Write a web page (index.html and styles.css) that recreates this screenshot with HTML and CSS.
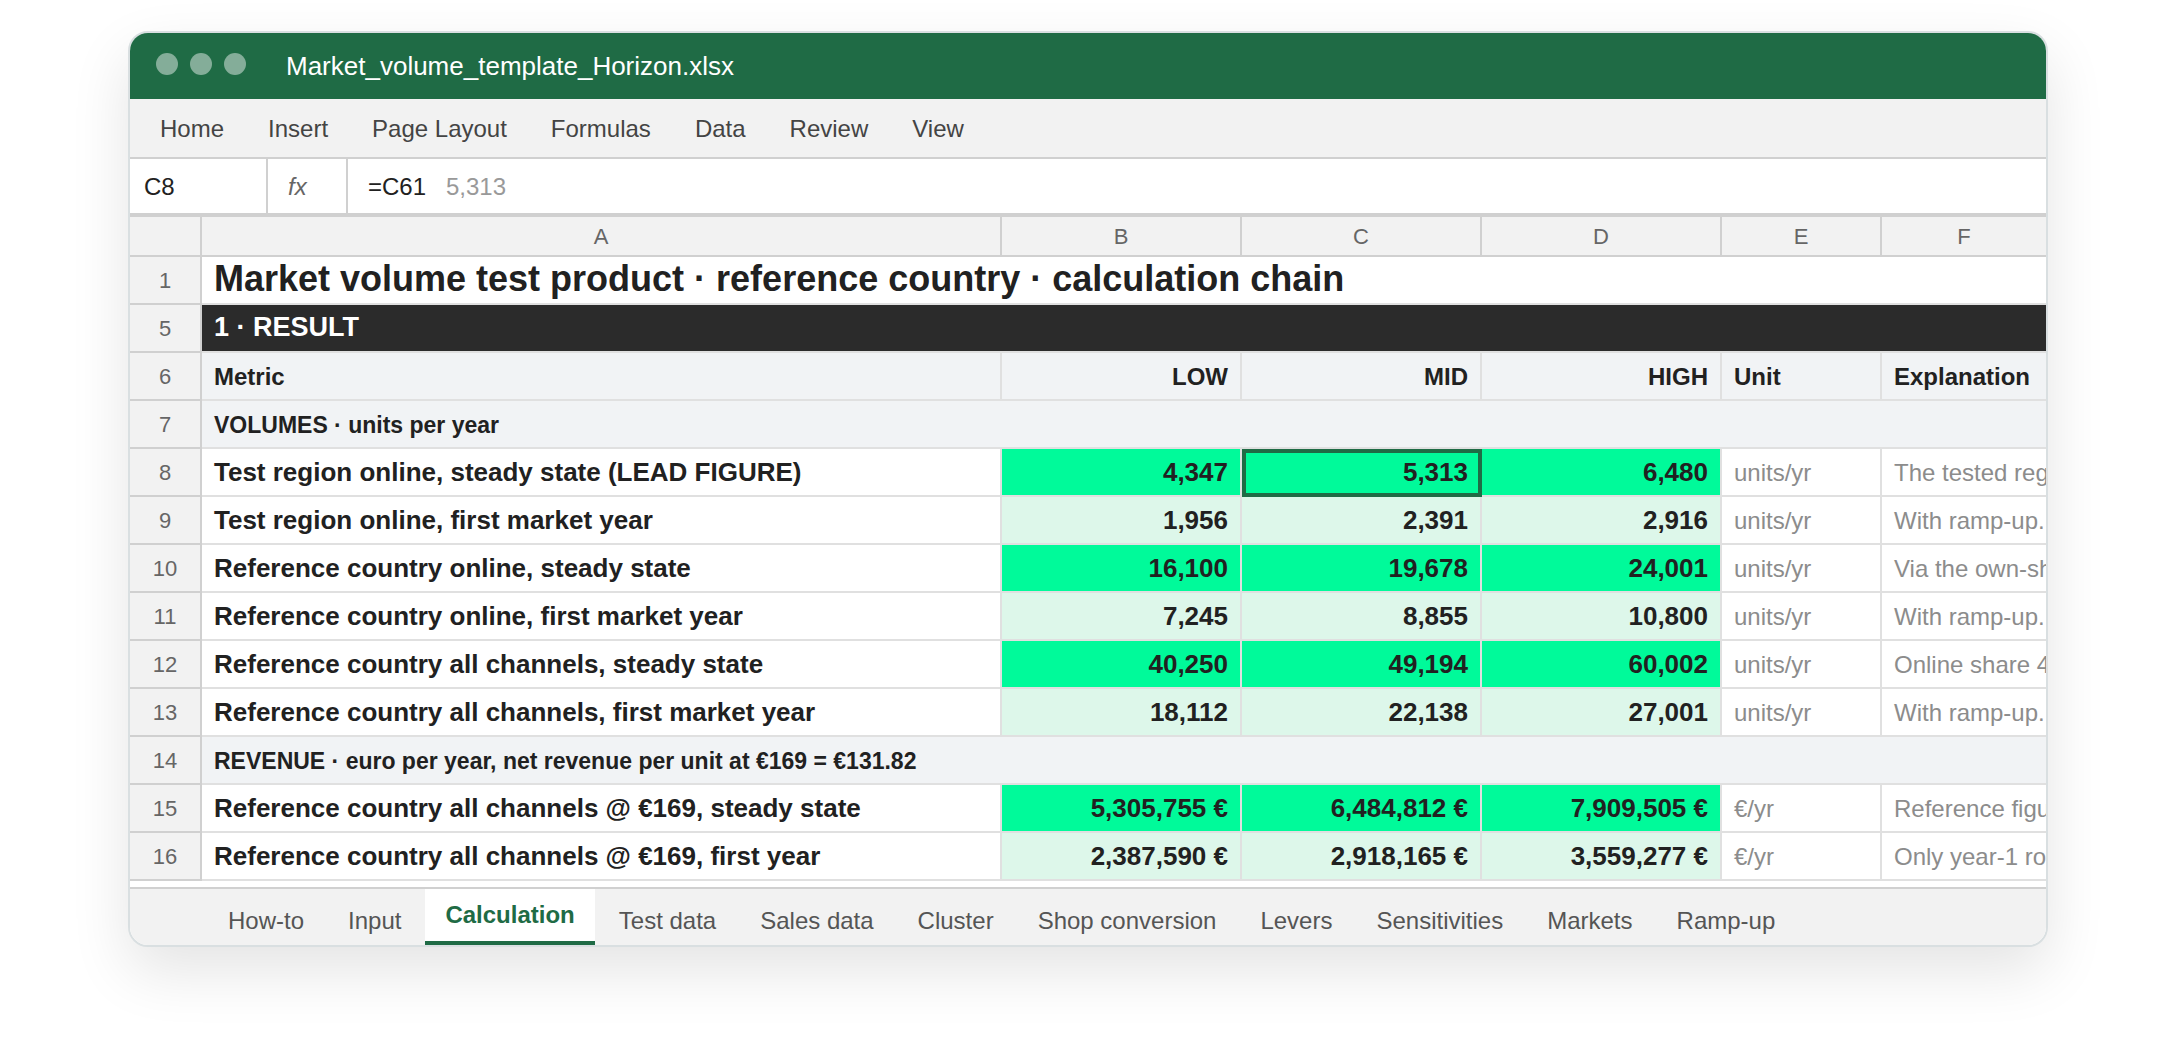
FILE: index.html
```html
<!DOCTYPE html>
<html lang="en">
<head>
<meta charset="utf-8">
<meta name="viewport" content="width=device-width, initial-scale=1">
<title>Market_volume_template_Horizon.xlsx</title>
<link rel="stylesheet" href="styles.css">
</head>
<body>
<main class="window">
  <header class="titlebar">
    <div class="dots" aria-hidden="true">
      <span class="dot"></span><span class="dot"></span><span class="dot"></span>
    </div>
    <h1 class="filename">Market_volume_template_Horizon.xlsx</h1>
  </header>

  <nav class="ribbon" aria-label="Ribbon">
    <button type="button" class="ribbon-item">Home</button>
    <button type="button" class="ribbon-item">Insert</button>
    <button type="button" class="ribbon-item">Page Layout</button>
    <button type="button" class="ribbon-item">Formulas</button>
    <button type="button" class="ribbon-item">Data</button>
    <button type="button" class="ribbon-item">Review</button>
    <button type="button" class="ribbon-item">View</button>
  </nav>

  <div class="formula-bar">
    <input class="name-box" type="text" value="C8" aria-label="Name box">
    <button type="button" class="fx">fx</button>
    <div class="formula">
      <input class="formula-input" type="text" value="=C61" aria-label="Formula">
      <output class="formula-result">5,313</output>
    </div>
  </div>

  <div class="sheet">
    <table class="grid">
      <colgroup>
        <col class="col-num"><col class="col-metric"><col class="col-value"><col class="col-value"><col class="col-value"><col class="col-unit"><col>
      </colgroup>
      <thead>
        <tr class="letters">
          <td></td>
          <th scope="col">A</th><th scope="col">B</th><th scope="col">C</th><th scope="col">D</th><th scope="col">E</th><th scope="col">F</th>
        </tr>
      </thead>
      <tbody>
        <tr class="title-row"><th class="num" scope="row">1</th><td colspan="6">Market volume test product · reference country · calculation chain</td></tr>
        <tr class="section-row"><th class="num" scope="row">5</th><td colspan="6">1 · RESULT</td></tr>
        <tr class="head-row"><th class="num" scope="row">6</th><td>Metric</td><td class="value">LOW</td><td class="value">MID</td><td class="value">HIGH</td><td>Unit</td><td>Explanation</td></tr>
        <tr class="group-row"><th class="num" scope="row">7</th><td colspan="6">VOLUMES · units per year</td></tr>
        <tr class="strong"><th class="num" scope="row">8</th><td class="metric">Test region online, steady state (LEAD FIGURE)</td><td class="value">4,347</td><td class="value selected">5,313</td><td class="value">6,480</td><td class="note">units/yr</td><td class="note">The tested region</td></tr>
        <tr class="soft"><th class="num" scope="row">9</th><td class="metric">Test region online, first market year</td><td class="value">1,956</td><td class="value">2,391</td><td class="value">2,916</td><td class="note">units/yr</td><td class="note">With ramp-up.</td></tr>
        <tr class="strong"><th class="num" scope="row">10</th><td class="metric">Reference country online, steady state</td><td class="value">16,100</td><td class="value">19,678</td><td class="value">24,001</td><td class="note">units/yr</td><td class="note">Via the own-shop</td></tr>
        <tr class="soft"><th class="num" scope="row">11</th><td class="metric">Reference country online, first market year</td><td class="value">7,245</td><td class="value">8,855</td><td class="value">10,800</td><td class="note">units/yr</td><td class="note">With ramp-up.</td></tr>
        <tr class="strong"><th class="num" scope="row">12</th><td class="metric">Reference country all channels, steady state</td><td class="value">40,250</td><td class="value">49,194</td><td class="value">60,002</td><td class="note">units/yr</td><td class="note">Online share 40%</td></tr>
        <tr class="soft"><th class="num" scope="row">13</th><td class="metric">Reference country all channels, first market year</td><td class="value">18,112</td><td class="value">22,138</td><td class="value">27,001</td><td class="note">units/yr</td><td class="note">With ramp-up.</td></tr>
        <tr class="group-row"><th class="num" scope="row">14</th><td colspan="6">REVENUE · euro per year, net revenue per unit at €169 = €131.82</td></tr>
        <tr class="strong"><th class="num" scope="row">15</th><td class="metric">Reference country all channels @ €169, steady state</td><td class="value">5,305,755 €</td><td class="value">6,484,812 €</td><td class="value">7,909,505 €</td><td class="note">€/yr</td><td class="note">Reference figure</td></tr>
        <tr class="soft"><th class="num" scope="row">16</th><td class="metric">Reference country all channels @ €169, first year</td><td class="value">2,387,590 €</td><td class="value">2,918,165 €</td><td class="value">3,559,277 €</td><td class="note">€/yr</td><td class="note">Only year-1 rollout</td></tr>
      </tbody>
    </table>
  </div>

  <nav class="tabs" aria-label="Sheets">
    <button type="button" class="tab">How-to</button>
    <button type="button" class="tab">Input</button>
    <button type="button" class="tab active" aria-current="page">Calculation</button>
    <button type="button" class="tab">Test data</button>
    <button type="button" class="tab">Sales data</button>
    <button type="button" class="tab">Cluster</button>
    <button type="button" class="tab">Shop conversion</button>
    <button type="button" class="tab">Levers</button>
    <button type="button" class="tab">Sensitivities</button>
    <button type="button" class="tab">Markets</button>
    <button type="button" class="tab">Ramp-up</button>
  </nav>
</main>
</body>
</html>
```
FILE: styles.css
```css
:root {
  --green: #1f6b45;
  --chrome: #f2f2f2;
  --line: #d0d0d0;
  --cell-line: #e0e0e0;
  --ink: #212121;
}

* {
  box-sizing: border-box;
}

body {
  margin: 0;
  padding: 31px 128px 91px;
  background: #fff;
  color: var(--ink);
  font-family: "Liberation Sans", Arial, Helvetica, sans-serif;
  font-size: 24px;
  line-height: 28px;
}

button,
input {
  margin: 0;
  padding: 0;
  border: 0;
  border-radius: 0;
  background: none;
  color: inherit;
  font: inherit;
  white-space: nowrap;
}

.window {
  overflow: hidden;
  border: 2px solid #d9dfe1;
  border-radius: 20px;
  background: #fff;
  box-shadow: 0 24px 60px rgba(0, 0, 0, 0.11);
}

/* Title bar */
.titlebar {
  display: flex;
  align-items: flex-start;
  gap: 40px;
  padding: 20px 26px;
  background: var(--green);
  color: #fff;
}

.dots {
  display: flex;
  gap: 12px;
}

.dot {
  width: 22px;
  height: 22px;
  border-radius: 50%;
  background: rgba(255, 255, 255, 0.45);
}

.filename {
  margin: 0;
  font-size: 26px;
  font-weight: 400;
  line-height: 26px;
}

/* Ribbon */
.ribbon {
  display: flex;
  gap: 44px;
  height: 60px;
  padding: 2px 30px 0;
  border-bottom: 2px solid var(--line);
  background: var(--chrome);
  color: #444;
}

/* Formula bar */
.formula-bar {
  display: flex;
  height: 56px;
  border-bottom: 2px solid var(--line);
}

.name-box {
  width: 138px;
  padding: 2px 14px 0;
  border-right: 2px solid var(--line);
}

.fx {
  width: 80px;
  padding: 2px 20px 0;
  border-right: 2px solid var(--line);
  color: #666;
  font-style: italic;
  text-align: left;
}

.formula {
  display: flex;
  flex: 1;
  align-items: center;
  gap: 18px;
  padding: 2px 20px 0;
}

.formula-input {
  width: 60px;
}

.formula-result {
  color: #999;
}

/* Sheet */
.sheet {
  overflow: hidden;
  padding-bottom: 6px;
  border-top: 2px solid var(--line);
}

.grid {
  width: 100%;
  border-spacing: 0;
  table-layout: fixed;
}

.col-num {
  width: 72px;
}

.col-metric {
  width: 800px;
}

.col-value {
  width: 240px;
}

.col-unit {
  width: 160px;
}

.grid td,
.grid th {
  height: 48px;
  padding: 2px 12px 0;
  overflow: hidden;
  border-right: 2px solid var(--cell-line);
  border-bottom: 2px solid var(--cell-line);
  text-align: left;
  white-space: nowrap;
}

.grid .letters td,
.grid .letters th {
  height: 40px;
  border-color: var(--line);
  background: var(--chrome);
  color: #666;
  font-size: 22px;
  font-weight: 400;
  text-align: center;
}

.grid .num {
  padding: 2px 0 0;
  border-color: var(--line);
  background: var(--chrome);
  color: #666;
  font-size: 22px;
  font-weight: 400;
  text-align: center;
}

.grid tr > :last-child {
  border-right: 0;
}

.grid .title-row td {
  padding: 0 12px 2px;
  font-size: 36px;
  font-weight: 700;
}

.grid .section-row td {
  padding: 0 12px 2px;
  background: #2b2b2b;
  color: #fff;
  font-size: 27px;
  font-weight: 700;
}

.head-row td,
.group-row td {
  background: #f1f3f5;
  font-weight: 700;
}

.group-row td {
  font-size: 23px;
}

.grid .metric {
  padding: 0 12px;
  font-size: 26px;
  font-weight: 700;
}

.grid .value {
  text-align: right;
}

.grid .strong .value,
.grid .soft .value {
  padding: 0 12px;
  font-size: 26px;
  font-weight: 700;
}

.strong .value {
  background: #00fa9a;
}

.soft .value {
  background: #ddf7ea;
}

.selected {
  outline: 4px solid var(--green);
  outline-offset: -4px;
}

.note {
  color: #8c8c8c;
}

/* Sheet tabs */
.tabs {
  display: flex;
  align-items: flex-end;
  gap: 4px;
  padding: 0 78px;
  border-top: 2px solid var(--line);
  background: var(--chrome);
  color: #555;
}

.tab {
  padding: 8px 20px 10px;
}

.tab.active {
  padding: 12px 20px;
  border-bottom: 4px solid var(--green);
  background: #fff;
  color: var(--green);
  font-weight: 700;
}
```
